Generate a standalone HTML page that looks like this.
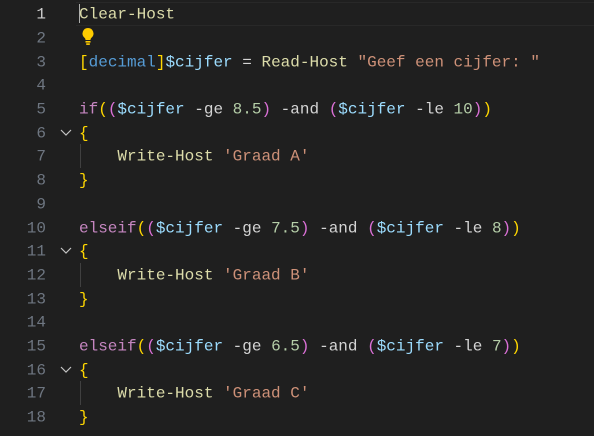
<!DOCTYPE html>
<html><head><style>
html,body{margin:0;padding:0;background:#1f1f1f;width:594px;height:436px;overflow:hidden}
.l{position:absolute;left:0;width:594px;height:23.7px;line-height:23.7px;font-family:"Liberation Mono",monospace;font-size:16px;white-space:pre;color:#d4d4d4;transform:translateY(1.5px)}
.n{position:absolute;right:548px;color:#6e7681;font-family:"Liberation Mono",monospace;font-size:16px}
.c{position:absolute;left:79px}
.f{color:#dcdcaa}.y{color:#ffd700}.p{color:#da70d6}.b{color:#569cd6}.v{color:#9cdcfe}.s{color:#ce9178}.k{color:#c586c0}.d{color:#b5cea8}
.cur{position:absolute;left:76px;top:2px;width:518px;height:22px;border-top:1px solid #282828;border-bottom:1px solid #282828}
.chev{position:absolute;left:59px;width:14px;height:23.7px}
.g{position:absolute;left:80px;width:1px;height:23.7px;background:#404040}
</style></head><body>
<div class="cur"></div>
<div style="position:absolute;left:79px;top:4px;width:1px;height:19px;background:#aeafad"></div>
<div class="l" style="top:2.2px"><span class="n" style="color:#cccccc">1</span><span class="c f">Clear-Host</span></div>
<div class="l" style="top:25.9px"><span class="n">2</span></div>
<svg style="position:absolute;left:81px;top:27px" width="14" height="19" viewBox="0 0 14 19"><path d="M7 1a5.5 5.5 0 0 0-3.5 9.7c.7.7 1 1.3 1 2.3h5c0-1 .3-1.6 1-2.3A5.5 5.5 0 0 0 7 1z" fill="#ffcc00"/><rect x="4.5" y="14" width="5" height="1.6" fill="#ffcc00"/><rect x="5.2" y="16.3" width="3.6" height="1.6" fill="#ffcc00"/></svg>
<div class="l" style="top:49.6px"><span class="n">3</span><span class="c"><span class="y">[</span><span class="b">decimal</span><span class="y">]</span><span class="v">$cijfer</span> = <span class="f">Read-Host</span> <span class="s">"Geef een cijfer: "</span></span></div>
<div class="l" style="top:73.3px"><span class="n">4</span></div>
<div class="l" style="top:97px"><span class="n">5</span><span class="c"><span class="k">if</span><span class="y">(</span><span class="p">(</span><span class="v">$cijfer</span> -ge <span class="d">8.5</span><span class="p">)</span> -and <span class="p">(</span><span class="v">$cijfer</span> -le <span class="d">10</span><span class="p">)</span><span class="y">)</span></span></div>
<div class="l" style="top:120.7px"><span class="n">6</span><span class="c y">{</span></div>
<div class="l" style="top:144.4px"><span class="n">7</span><span class="c">    <span class="f">Write-Host</span> <span class="s">'Graad A'</span></span></div>
<div class="l" style="top:168.1px"><span class="n">8</span><span class="c y">}</span></div>
<div class="l" style="top:191.8px"><span class="n">9</span></div>
<div class="l" style="top:215.5px"><span class="n">10</span><span class="c"><span class="k">elseif</span><span class="y">(</span><span class="p">(</span><span class="v">$cijfer</span> -ge <span class="d">7.5</span><span class="p">)</span> -and <span class="p">(</span><span class="v">$cijfer</span> -le <span class="d">8</span><span class="p">)</span><span class="y">)</span></span></div>
<div class="l" style="top:239.2px"><span class="n">11</span><span class="c y">{</span></div>
<div class="l" style="top:262.9px"><span class="n">12</span><span class="c">    <span class="f">Write-Host</span> <span class="s">'Graad B'</span></span></div>
<div class="l" style="top:286.6px"><span class="n">13</span><span class="c y">}</span></div>
<div class="l" style="top:310.3px"><span class="n">14</span></div>
<div class="l" style="top:334px"><span class="n">15</span><span class="c"><span class="k">elseif</span><span class="y">(</span><span class="p">(</span><span class="v">$cijfer</span> -ge <span class="d">6.5</span><span class="p">)</span> -and <span class="p">(</span><span class="v">$cijfer</span> -le <span class="d">7</span><span class="p">)</span><span class="y">)</span></span></div>
<div class="l" style="top:357.7px"><span class="n">16</span><span class="c y">{</span></div>
<div class="l" style="top:381.4px"><span class="n">17</span><span class="c">    <span class="f">Write-Host</span> <span class="s">'Graad C'</span></span></div>
<div class="l" style="top:405.1px"><span class="n">18</span><span class="c y">}</span></div>
<div class="g" style="top:144.4px"></div><div class="g" style="top:262.9px"></div><div class="g" style="top:381.4px"></div>
<svg class="chev" style="top:120.7px" viewBox="0 0 14 23.7"><path d="M2 9l5 5 5-5" stroke="#c5c5c5" stroke-width="1.2" fill="none"/></svg>
<svg class="chev" style="top:239.2px" viewBox="0 0 14 23.7"><path d="M2 9l5 5 5-5" stroke="#c5c5c5" stroke-width="1.2" fill="none"/></svg>
<svg class="chev" style="top:357.7px" viewBox="0 0 14 23.7"><path d="M2 9l5 5 5-5" stroke="#c5c5c5" stroke-width="1.2" fill="none"/></svg>
</body></html>
